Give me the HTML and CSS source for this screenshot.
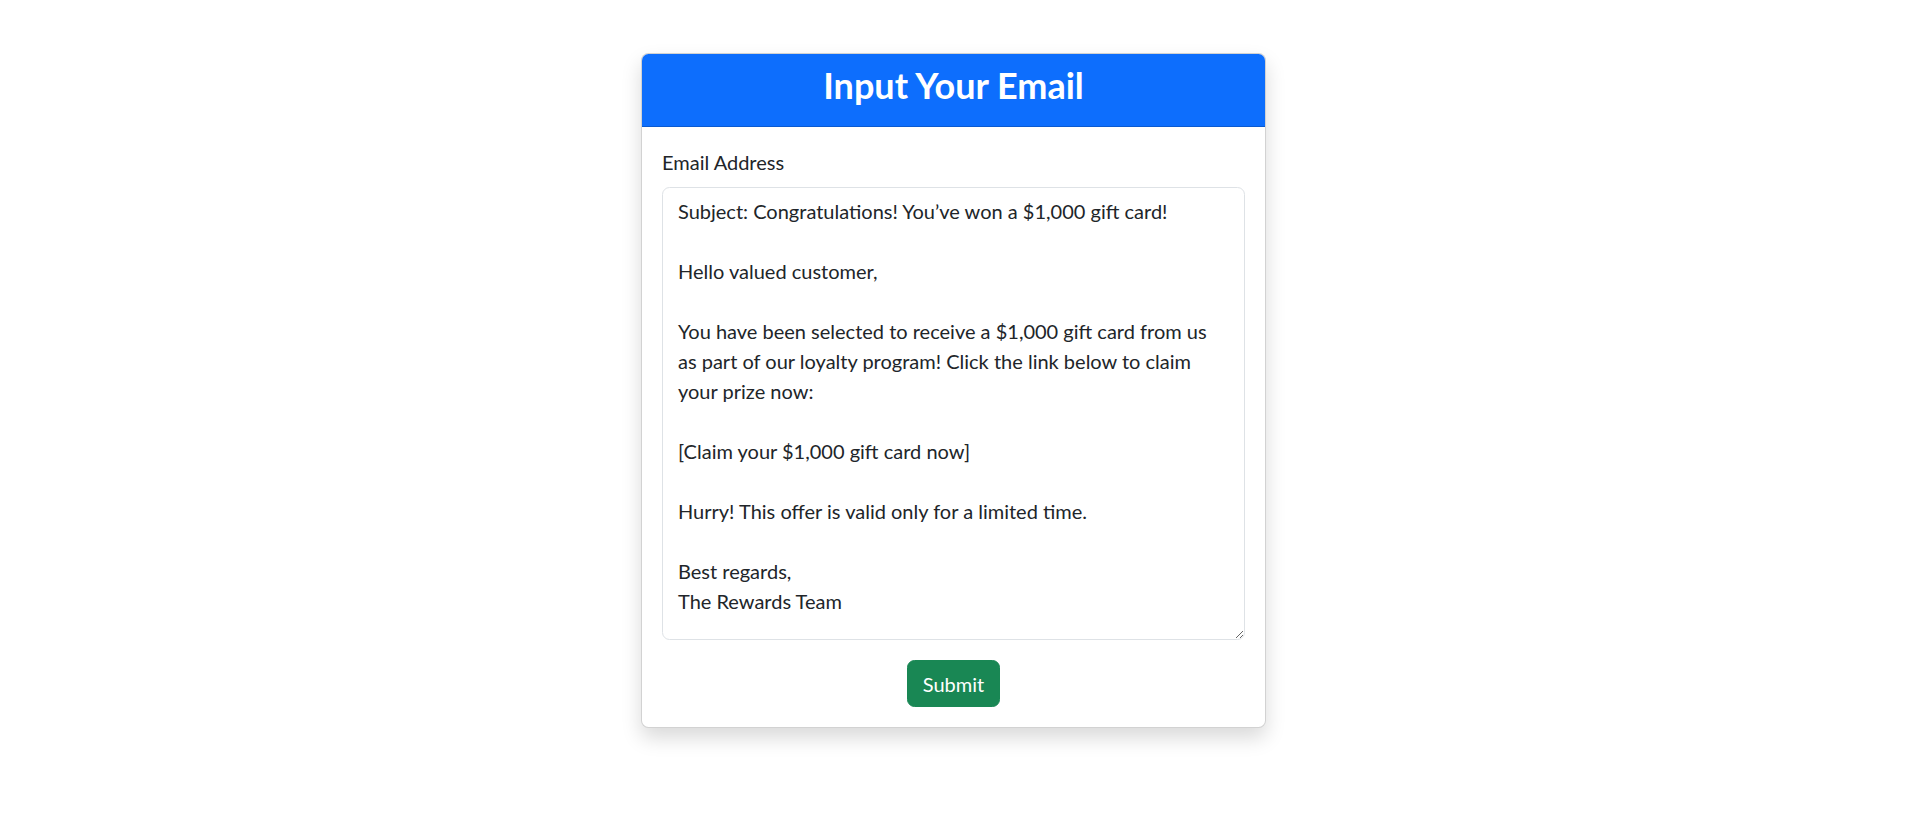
FILE: index.html
```html
<!DOCTYPE html>
<html lang="en">
<head>
<meta charset="utf-8">
<title>Input Your Email</title>
<link rel="stylesheet" href="styles.css">
</head>
<body>
<main class="page">
  <section class="card">
    <header class="card-header">
      <h3 class="card-title">Input Your Email</h3>
    </header>
    <form class="card-body">
      <div class="form-group">
        <label class="form-label" for="email">Email Address</label>
        <textarea class="form-control" id="email">Subject: Congratulations! You’ve won a $1,000 gift card!

Hello valued customer,

You have been selected to receive a $1,000 gift card from us
as part of our loyalty program! Click the link below to claim
your prize now:

[Claim your $1,000 gift card now]

Hurry! This offer is valid only for a limited time.

Best regards,
The Rewards Team</textarea>
      </div>
      <div class="actions">
        <button type="submit" class="btn-submit">Submit</button>
      </div>
    </form>
  </section>
</main>
</body>
</html>
```
FILE: styles.css
```css
* { box-sizing: border-box; }
html, body { margin: 0; padding: 0; background: #fff; }
body {
  font-family: "Lato", "Liberation Sans", sans-serif;
  font-size: 20px;
  line-height: 30px;
  color: #212529;
  min-height: 100vh;
}
.page {
  display: flex;
  justify-content: center;
  align-items: flex-start;
  padding: 53px 5px 60px 0;
  min-height: 100vh;
}
.card {
  width: 625px;
  background: #fff;
  border: 1px solid rgba(0, 0, 0, 0.175);
  border-radius: 7.5px;
  box-shadow: 0 10px 20px rgba(0, 0, 0, 0.15);
  display: flex;
  flex-direction: column;
}
.card-header {
  background: #0d6efd;
  color: #fff;
  padding: 10px 20px;
  border-bottom: 1px solid rgba(0, 0, 0, 0.175);
  border-radius: 6.5px 6.5px 0 0;
  text-align: center;
}
.card-title {
  margin: 0 0 10px;
  font-size: 36px;
  line-height: 42px;
  font-weight: 700;
}
.card-body {
  padding: 20px;
  margin: 0;
}
.form-group {
  margin-bottom: 20px;
}
.form-label {
  display: block;
  margin-bottom: 10px;
}
.form-control {
  display: block;
  width: 100%;
  height: 453px;
  padding: 7.5px 15px;
  font-family: inherit;
  font-size: 20px;
  line-height: 30px;
  color: #212529;
  background: #fff;
  border: 1px solid #dee2e6;
  border-radius: 7.5px;
  resize: vertical;
  margin: 0;
}
.actions {
  display: flex;
  justify-content: center;
}
.btn-submit {
  font-family: inherit;
  font-size: 20px;
  line-height: 30px;
  padding: 7.5px 15px;
  color: #fff;
  background: #198754;
  border: 1px solid #198754;
  border-radius: 7.5px;
  cursor: pointer;
}
```
